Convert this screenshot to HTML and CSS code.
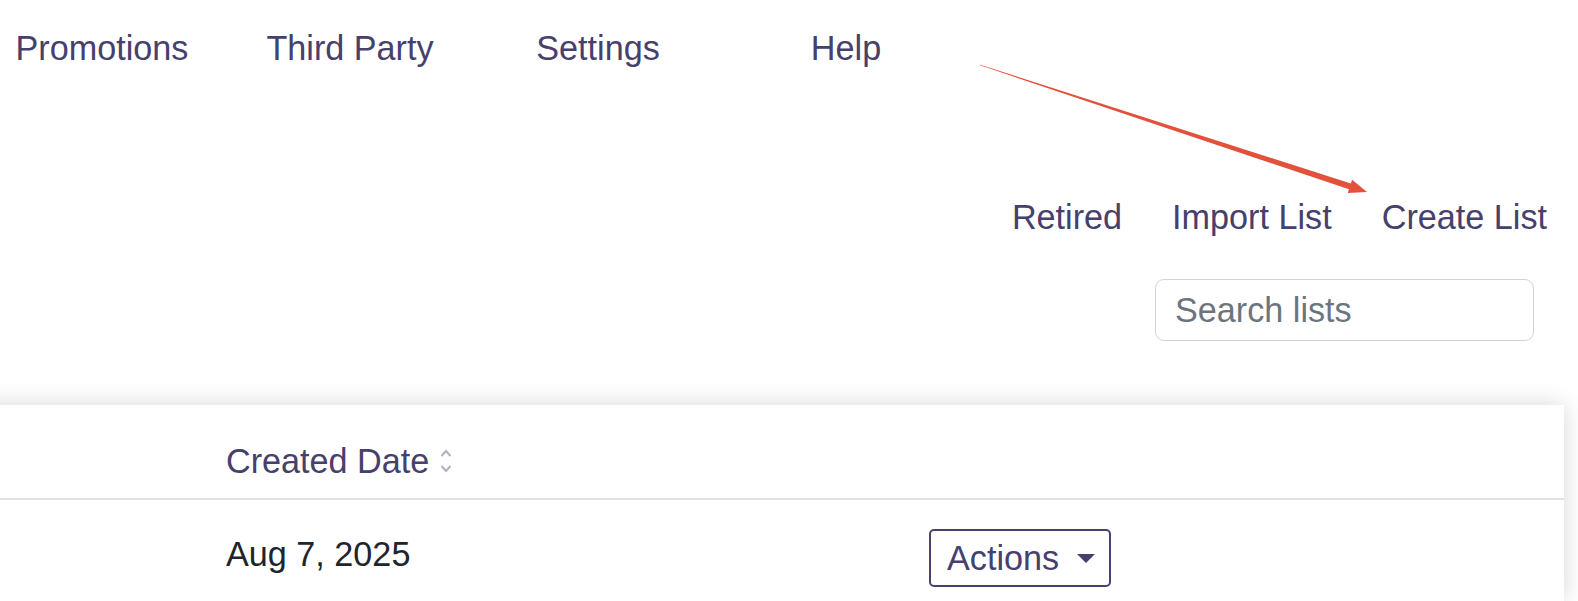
FILE: index.html
```html
<!DOCTYPE html>
<html lang="en">
<head>
<meta charset="utf-8">
<title>Lists</title>
<link rel="stylesheet" href="styles.css">
</head>
<body>
<nav class="topnav">
  <a class="nav-item" href="#">Promotions</a>
  <a class="nav-item" href="#">Third Party</a>
  <a class="nav-item" href="#">Settings</a>
  <a class="nav-item" href="#">Help</a>
</nav>

<div class="toolbar">
  <a class="tool-link" href="#">Retired</a>
  <a class="tool-link" href="#">Import List</a>
  <a class="tool-link" href="#">Create List</a>
</div>

<div class="search-row">
  <input class="search-input" type="text" placeholder="Search lists">
</div>

<div class="card">
  <div class="row head-row">
    <div class="cell"></div>
    <div class="cell head-cell">Created Date
      <svg class="sort-icon" width="14" height="28" viewBox="0 0 14 28"><path d="M2.5 9 L7 4 L11.5 9" fill="none" stroke="#b3adc6" stroke-width="2"/><path d="M2.5 19 L7 24 L11.5 19" fill="none" stroke="#b3adc6" stroke-width="2"/></svg>
    </div>
    <div class="cell"></div>
  </div>
  <div class="row body-row">
    <div class="cell"></div>
    <div class="cell date-cell">Aug 7, 2025</div>
    <div class="cell action-cell">
      <button class="actions-btn" type="button">Actions<span class="caret"></span></button>
    </div>
  </div>
</div>

<svg class="annotation" width="1578" height="601" viewBox="0 0 1578 601">
  <polygon points="980.1,64.7 1350.9,183.5 1352.1,179.7 1367,192 1347.7,193.1 1349.0,189.3 979.9,65.3" fill="#e2513b"/>
</svg>
</body>
</html>
```

FILE: styles.css
```css
* { box-sizing: border-box; }

html, body {
  margin: 0;
  padding: 0;
  background: #ffffff;
  overflow: hidden;
}

body {
  font-family: "Liberation Sans", Arial, sans-serif;
  font-size: 34.2px;
  color: #212529;
  position: relative;
  width: 1578px;
  height: 601px;
}

a { text-decoration: none; }

.topnav {
  display: flex;
  margin-left: -22px;
  padding-top: 28px;
}

.nav-item {
  width: 248px;
  text-align: center;
  line-height: 40px;
  color: #46406c;
}

.toolbar {
  display: flex;
  justify-content: flex-end;
  gap: 50px;
  margin-top: 129px;
  padding-right: 31px;
}

.tool-link {
  line-height: 40px;
  color: #46406c;
}

.search-row {
  display: flex;
  justify-content: flex-end;
  margin-top: 42px;
  padding-right: 44px;
}

.search-input {
  width: 379px;
  height: 62px;
  border: 1px solid #ced4da;
  border-radius: 9px;
  padding: 0 0 0 19px;
  font-family: "Liberation Sans", Arial, sans-serif;
  font-size: 34.2px;
  color: #495057;
  background: #fff;
  outline: none;
}

.search-input::placeholder {
  color: #6c757d;
  opacity: 1;
}

.card {
  margin-top: 64px;
  margin-left: -40px;
  margin-right: 14px;
  background: #fff;
  box-shadow: 0 0 22px rgba(0, 0, 0, 0.16);
}

.row {
  display: grid;
  grid-template-columns: 266px 703px 1fr;
  align-items: start;
}

.head-row {
  border-bottom: 2px solid #dee2e6;
  padding: 36px 0 17px;
}

.head-cell {
  line-height: 40px;
  color: #46406c;
  display: flex;
  align-items: center;
}

.sort-icon {
  margin-left: 10px;
  margin-top: -1px;
}

.body-row {
  height: 101px;
}

.date-cell {
  padding-top: 34px;
  line-height: 40px;
  color: #212529;
}

.action-cell {
  padding-top: 29px;
}

.actions-btn {
  display: inline-flex;
  align-items: center;
  gap: 18px;
  height: 58px;
  padding: 0 14px 0 16px;
  border: 2px solid #4b3f6e;
  border-radius: 5px;
  background: #fff;
  color: #46406c;
  font-family: "Liberation Sans", Arial, sans-serif;
  font-size: 34.2px;
}

.caret {
  width: 0;
  height: 0;
  border-top: 9px solid #46406c;
  border-left: 9.5px solid transparent;
  border-right: 9.5px solid transparent;
}

.annotation {
  position: absolute;
  left: 0;
  top: 0;
  pointer-events: none;
}
```
